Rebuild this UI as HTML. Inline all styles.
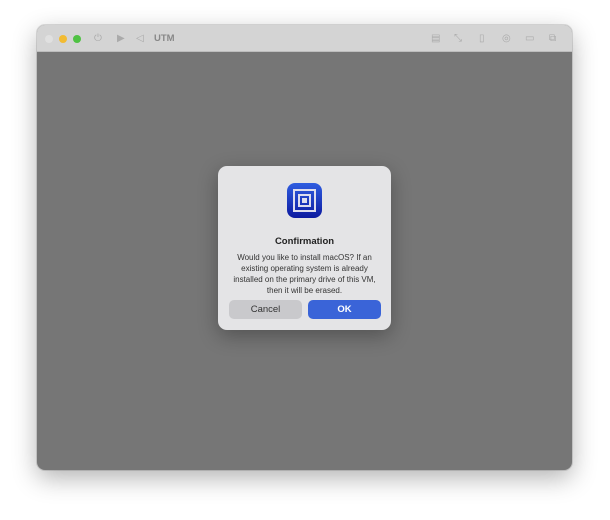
<!DOCTYPE html><html><head><style>
body{margin:0;width:610px;height:520px;background:#fff;font-family:"Liberation Sans",sans-serif;position:relative;overflow:hidden}
.win{position:absolute;left:37px;top:25px;width:535px;height:445px;border-radius:8px;overflow:hidden;box-shadow:0 8px 25px rgba(0,0,0,.3),0 0 0 1px rgba(0,0,0,.12);background:#767676}
.tb{height:26px;background:#d4d4d4;position:relative;border-bottom:1px solid #bdbdbd}
.dot{position:absolute;top:10px;width:8px;height:8px;border-radius:50%}
.ic{position:absolute;top:8px;color:#aaa;font-size:10px}
.dlg{position:absolute;left:218px;top:166px;width:173px;height:164px;background:#e4e4e6;border-radius:9px;box-shadow:0 6px 20px rgba(0,0,0,.3)}
.btn{position:absolute;top:134px;height:19px;border-radius:5px;font-size:9.5px;line-height:19px;text-align:center}
</style></head><body>
<div class="win"><div class="tb">
<div class="dot" style="left:8px;background:#e0e0e0"></div>
<div class="dot" style="left:22px;background:#f2bb32"></div>
<div class="dot" style="left:36px;background:#4fc243"></div>
<div class="ic" style="left:57px">⏻</div>
<div class="ic" style="left:80px">▶</div>
<div class="ic" style="left:99px">◁</div>
<div style="position:absolute;left:117px;top:8px;font-size:9.5px;font-weight:bold;color:#888">UTM</div>
<div class="ic" style="left:394px">▤</div>
<div class="ic" style="left:417px">⤡</div>
<div class="ic" style="left:442px">▯</div>
<div class="ic" style="left:465px">◎</div>
<div class="ic" style="left:488px">▭</div>
<div class="ic" style="left:512px">⧉</div>
</div></div>
<div class="dlg">
<div style="position:absolute;left:69px;top:17px;width:35px;height:35px;border-radius:8px;background:linear-gradient(#2f5de0,#0d1aa0)">
<div style="position:absolute;left:6px;top:6px;width:19px;height:19px;border:2px solid #dde;"></div>
<div style="position:absolute;left:11px;top:11px;width:9px;height:9px;border:2px solid #dde;"></div>
<div style="position:absolute;left:15px;top:15px;width:5px;height:5px;background:#dde"></div>
</div>
<div style="position:absolute;top:70px;width:100%;text-align:center;font-size:9.5px;font-weight:bold;color:#222">Confirmation</div>
<div style="position:absolute;top:86px;left:8px;right:8px;text-align:center;font-size:8px;line-height:11px;color:#333">Would you like to install macOS? If an existing operating system is already installed on the primary drive of this VM, then it will be erased.</div>
<div class="btn" style="left:11px;width:73px;background:#c9c9cc;color:#333">Cancel</div>
<div class="btn" style="left:90px;width:73px;background:#3a64d8;color:#fff;font-weight:bold">OK</div>
</div>
</body></html>
